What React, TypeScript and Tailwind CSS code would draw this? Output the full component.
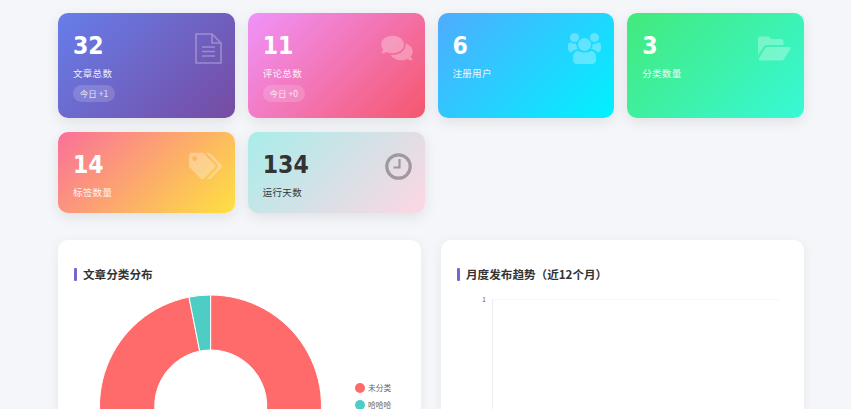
import { FaComments, FaTags } from 'react-icons/fa'
import type { ReactNode } from 'react'

interface StatCardProps {
  value: number
  label: string
  today?: number
  icon: ReactNode
  gradient: string
  dark?: boolean
  height: string
}

function FileIcon() {
  return (
    <svg viewBox="0 0 27 31" className="absolute top-[20px] right-[13px] h-[31px] w-[27px] opacity-30" fill="none" stroke="#fff" strokeWidth="1.6">
      <path d="M1 1 H17 L26 10 V30 H1 Z" />
      <path d="M17 1 V10 H26" />
      <path d="M7 14 H20 M7 18.5 H20 M7 23 H20" />
    </svg>
  )
}

function UsersIcon() {
  return (
    <svg viewBox="0 0 33 31" className="absolute top-[20px] right-[13px] h-[31px] w-[33px] opacity-30" fill="#fff">
      <circle cx="6.5" cy="4.5" r="4.5" />
      <circle cx="26.5" cy="4.5" r="4.5" />
      <circle cx="16.5" cy="11.5" r="6.5" />
      <path d="M0 12 C0 10 1.5 9.5 3 9.5 C4 10.5 6 11 8 10.5 C8.5 13 9 15 10 16 C6 16.5 4 18 3.5 19.5 C1.5 19 0 17.5 0 16 Z" />
      <path d="M33 12 C33 10 31.5 9.5 30 9.5 C29 10.5 27 11 25 10.5 C24.5 13 24 15 23 16 C27 16.5 29 18 29.5 19.5 C31.5 19 33 17.5 33 16 Z" />
      <path d="M5 24 C5 20 8 18 10 18 C13 20 20 20 23 18 C25 18 28 20 28 24 V27 C28 29.5 26 31 24 31 H9 C7 31 5 29.5 5 27 Z" />
    </svg>
  )
}

function FolderIcon() {
  return (
    <svg viewBox="0 0 33 25" className="absolute top-[23px] right-[13px] h-[25px] w-[33px] opacity-30" fill="#fff">
      <path d="M0 3 C0 1.5 1 0.5 2.5 0.5 H10 C11.5 0.5 12.5 1.5 12.5 3 H23 C24.5 3 25.5 4 25.5 5.5 V9 H9 C7 9 6 10 5 11.5 L0 19 Z" />
      <path d="M9.5 11 H31.5 C33 11 33 12 32.5 13 L26 23 C25.5 24 24.5 24.5 23.5 24.5 H2 C0.5 24.5 0.5 23.5 1 22.5 L7 12.5 C7.5 11.5 8.5 11 9.5 11 Z" />
    </svg>
  )
}

function ClockIcon() {
  return (
    <svg viewBox="0 0 27 27" className="absolute top-[21px] right-[13px] h-[27px] w-[27px] opacity-30" fill="none" stroke="#000" strokeWidth="3.2">
      <circle cx="13.5" cy="13.5" r="11.7" />
      <path d="M14.5 6 V14.5 H8.5" strokeWidth="2.2" />
    </svg>
  )
}

function StatCard({ value, label, today, icon, gradient, dark, height }: StatCardProps) {
  return (
    <div className={`relative rounded-[10px] pl-[15px] pt-[17px] shadow-[0_4px_14px_rgba(0,0,0,0.09)] ${gradient} ${height} ${dark ? 'text-[#333]' : 'text-white'}`}>
      <div className="font-['DejaVu_Sans_Condensed','DejaVu_Sans',sans-serif] text-[24.5px] leading-[31px] font-bold">{value}</div>
      <div className={`mt-[5px] text-[9.5px] leading-[14px] tracking-[0.3px] ${dark ? '' : 'opacity-90'}`}>{label}</div>
      {today !== undefined && (
        <div className="mt-[5px] flex h-[17px] w-[42px] items-center justify-center rounded-full bg-white/20 text-[8.5px] opacity-80">
          今日 +{today}
        </div>
      )}
      {icon}
    </div>
  )
}

function ChartTitle({ children }: { children: string }) {
  return (
    <div className="flex h-[13px] items-center gap-[6px]">
      <span className="h-[13px] w-[3px] rounded-[1px] bg-[#7468c8]" />
      <span className="text-[11.6px] leading-[13px] font-semibold text-[#333]">{children}</span>
    </div>
  )
}

function DonutChart() {
  return (
    <svg width="331" height="140" viewBox="0 0 331 140" className="mt-[13px] -ml-[1px]">
      <path
        d="M137.6 1 A111 111 0 1 1 116 3.1 L126.7 57.1 A56 56 0 1 0 137.6 56 Z"
        fill="#ff6b6b"
        stroke="#fff"
        strokeWidth="1"
      />
      <path
        d="M116 3.1 A111 111 0 0 1 137.6 1 L137.6 56 A56 56 0 0 0 126.7 57.1 Z"
        fill="#4ecdc4"
        stroke="#fff"
        strokeWidth="1"
      />
      <circle cx="287" cy="94" r="5" fill="#ff6b6b" />
      <text x="295" y="97" fontSize="7.8" fill="#666">未分类</text>
      <circle cx="287" cy="111" r="5" fill="#4ecdc4" />
      <text x="295" y="114" fontSize="7.8" fill="#666">哈哈哈</text>
    </svg>
  )
}

function TrendChart() {
  return (
    <svg width="331" height="140" viewBox="0 0 331 140" className="mt-[13px]">
      <line x1="35" y1="5.5" x2="323" y2="5.5" stroke="#f8f8fa" />
      <line x1="35.5" y1="5" x2="35.5" y2="140" stroke="#eeeef2" />
      <text x="25" y="8" fontSize="7" fill="#666">1</text>
    </svg>
  )
}

export default function App() {
  return (
    <div className="h-[409px] overflow-hidden bg-[#f5f6f9] pt-[13px] pr-[47px] pl-[58px] font-['Noto_Sans_CJK_SC','Noto_Sans',sans-serif]">
      <div className="grid grid-cols-4 gap-x-[13px] gap-y-[14px]">
        <StatCard value={32} label="文章总数" today={1} icon={<FileIcon />} gradient="bg-[linear-gradient(135deg,#667eea,#764ba2)]" height="h-[105px]" />
        <StatCard value={11} label="评论总数" today={0} icon={<FaComments className="absolute top-[21px] right-[12px] h-[28px] w-[32px] text-white opacity-30" />} gradient="bg-[linear-gradient(135deg,#f093fb,#f5576c)]" height="h-[105px]" />
        <StatCard value={6} label="注册用户" icon={<UsersIcon />} gradient="bg-[linear-gradient(135deg,#4facfe,#00f2fe)]" height="h-[105px]" />
        <StatCard value={3} label="分类数量" icon={<FolderIcon />} gradient="bg-[linear-gradient(135deg,#43e97b,#38f9d7)]" height="h-[105px]" />
        <StatCard value={14} label="标签数量" icon={<FaTags className="absolute top-[19px] right-[13px] h-[30px] w-[33px] text-white opacity-30" />} gradient="bg-[linear-gradient(135deg,#fa709a,#fee140)]" height="h-[81px]" />
        <StatCard value={134} label="运行天数" icon={<ClockIcon />} gradient="bg-[linear-gradient(135deg,#a8edea,#fed6e3)]" height="h-[81px]" dark />
      </div>
      <div className="mt-[27px] grid grid-cols-2 gap-x-[20px]">
        <div className="h-[300px] rounded-[10px] bg-white px-[16px] pt-[28px] shadow-[0_2px_12px_rgba(0,0,0,0.06)]">
          <ChartTitle>文章分类分布</ChartTitle>
          <DonutChart />
        </div>
        <div className="h-[300px] rounded-[10px] bg-white px-[16px] pt-[28px] shadow-[0_2px_12px_rgba(0,0,0,0.06)]">
          <ChartTitle>月度发布趋势（近12个月）</ChartTitle>
          <TrendChart />
        </div>
      </div>
    </div>
  )
}
